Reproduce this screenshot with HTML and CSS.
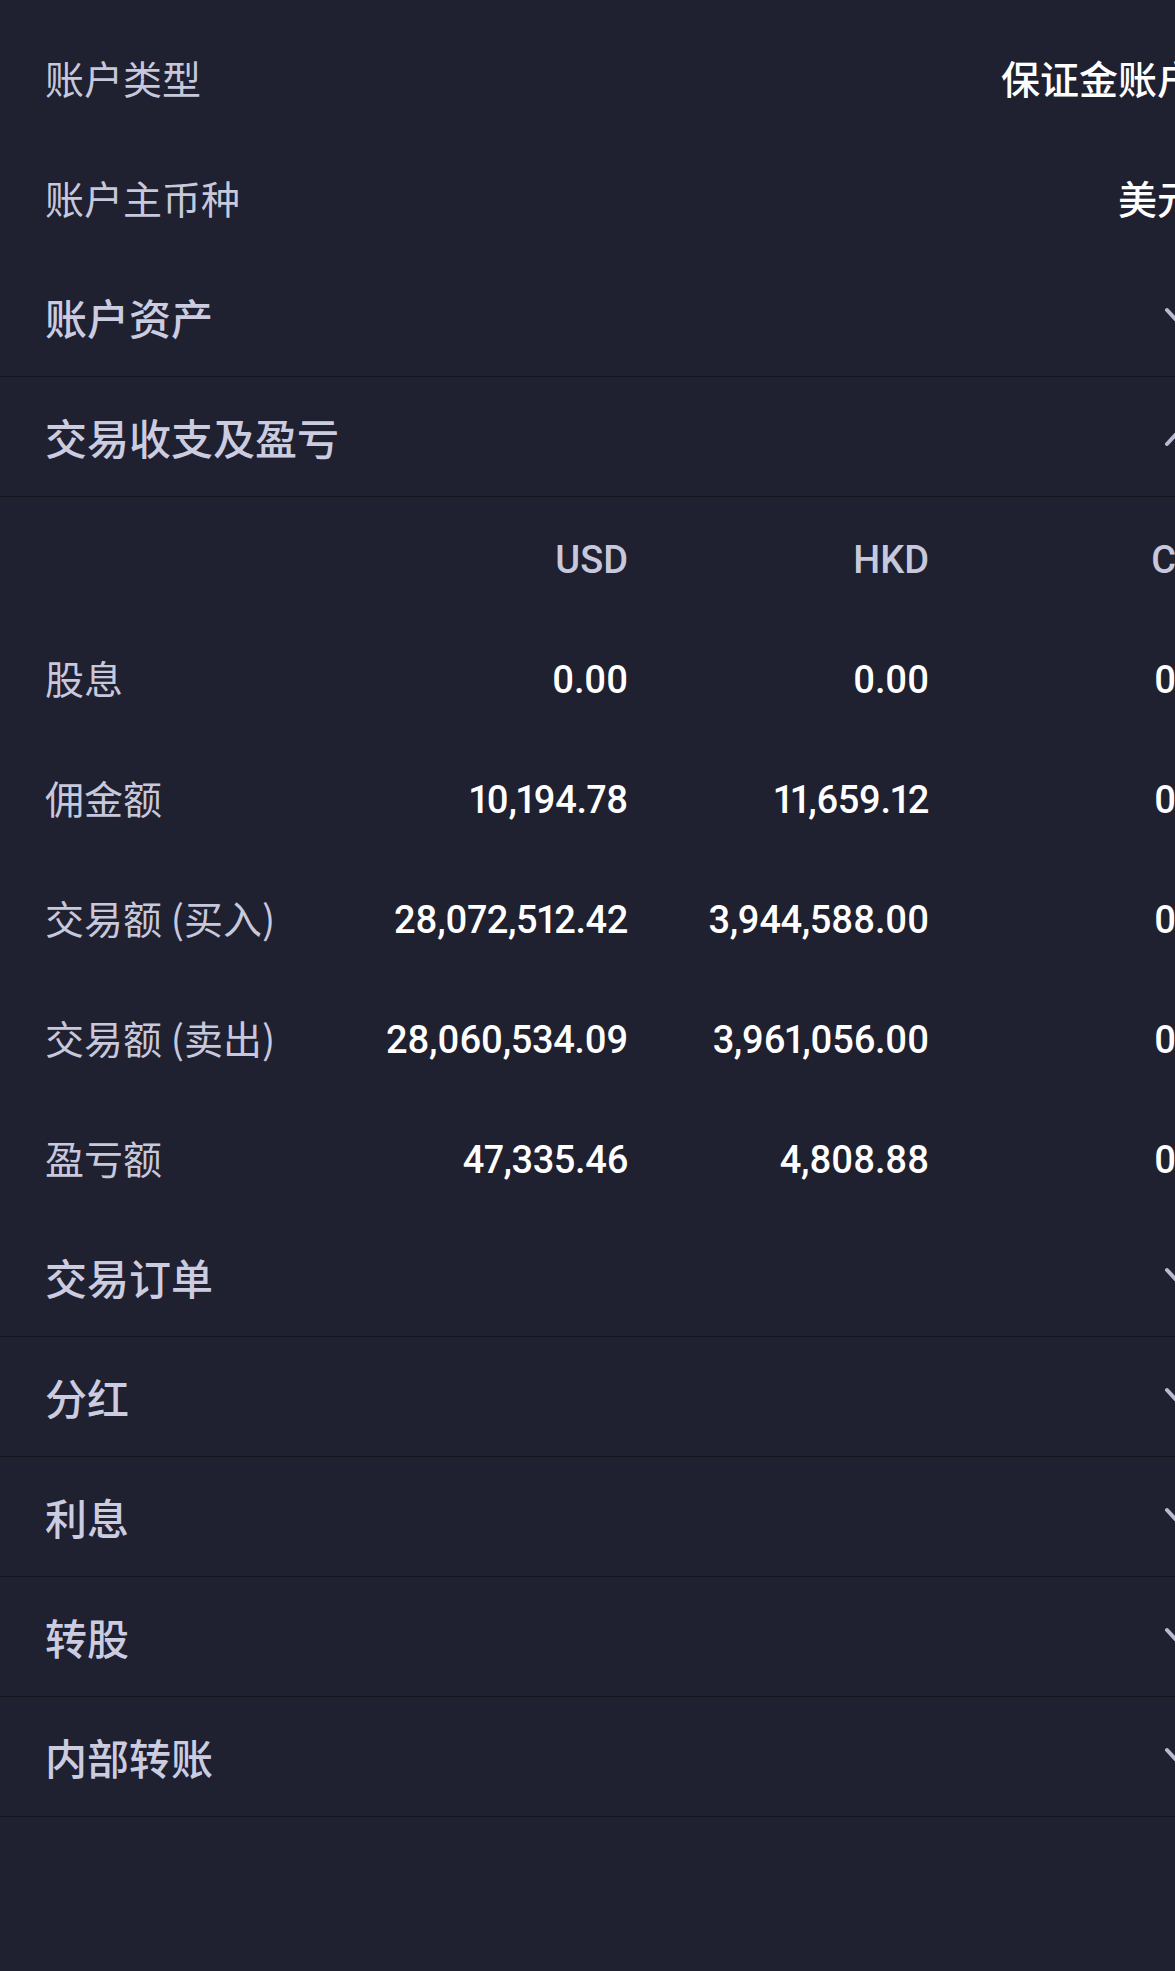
FILE: index.html
```html
<!DOCTYPE html>
<html lang="zh-CN">
<head>
<meta charset="utf-8">
<title>账户</title>
<link rel="stylesheet" href="styles.css">
</head>
<body>
<div class="page">
  <div class="row">
    <span class="label">账户类型</span>
    <span class="value">保证金账户</span>
  </div>
  <div class="row">
    <span class="label">账户主币种</span>
    <span class="value">美元</span>
  </div>
  <div class="row section">
    <span class="title">账户资产</span>
    <svg class="chev" viewBox="0 0 32 20" width="32" height="20"><path d="M3 3 L16 17 L29 3"/></svg>
  </div>
  <div class="row section">
    <span class="title">交易收支及盈亏</span>
    <svg class="chev" viewBox="0 0 32 20" width="32" height="20"><path d="M3 17 L16 3 L29 17"/></svg>
  </div>
  <div class="table">
    <div class="trow thead">
      <span></span><span class="num">USD</span><span class="num">HKD</span><span class="num">CNH</span>
    </div>
    <div class="trow">
      <span class="label">股息</span><span class="num">0.00</span><span class="num">0.00</span><span class="num">0.00</span>
    </div>
    <div class="trow">
      <span class="label">佣金额</span><span class="num">10,194.78</span><span class="num">11,659.12</span><span class="num">0.00</span>
    </div>
    <div class="trow">
      <span class="label">交易额 (买入)</span><span class="num">28,072,512.42</span><span class="num">3,944,588.00</span><span class="num">0.00</span>
    </div>
    <div class="trow">
      <span class="label">交易额 (卖出)</span><span class="num">28,060,534.09</span><span class="num">3,961,056.00</span><span class="num">0.00</span>
    </div>
    <div class="trow">
      <span class="label">盈亏额</span><span class="num">47,335.46</span><span class="num">4,808.88</span><span class="num">0.00</span>
    </div>
  </div>
  <div class="row section">
    <span class="title">交易订单</span>
    <svg class="chev" viewBox="0 0 32 20" width="32" height="20"><path d="M3 3 L16 17 L29 3"/></svg>
  </div>
  <div class="row section">
    <span class="title">分红</span>
    <svg class="chev" viewBox="0 0 32 20" width="32" height="20"><path d="M3 3 L16 17 L29 3"/></svg>
  </div>
  <div class="row section">
    <span class="title">利息</span>
    <svg class="chev" viewBox="0 0 32 20" width="32" height="20"><path d="M3 3 L16 17 L29 3"/></svg>
  </div>
  <div class="row section">
    <span class="title">转股</span>
    <svg class="chev" viewBox="0 0 32 20" width="32" height="20"><path d="M3 3 L16 17 L29 3"/></svg>
  </div>
  <div class="row section">
    <span class="title">内部转账</span>
    <svg class="chev" viewBox="0 0 32 20" width="32" height="20"><path d="M3 3 L16 17 L29 3"/></svg>
  </div>
</div>
</body>
</html>
```
FILE: styles.css
```css
html, body {
  margin: 0;
  padding: 0;
  background: #1f2030;
  overflow: hidden;
}

body {
  font-family: "Noto Sans CJK SC", "Noto Sans", sans-serif;
  color: #c7c8dc;
}

.page {
  width: 1241px;
  padding-top: 17px;
}

.row {
  box-sizing: border-box;
  height: 120px;
  padding: 0 45px;
  display: flex;
  align-items: center;
  justify-content: space-between;
}

.section {
  border-bottom: 1px solid #14151f;
}

.label {
  font-size: 39px;
  font-weight: 400;
  line-height: 1;
  color: #c7c8dc;
}

.title {
  font-size: 42px;
  font-weight: 500;
  line-height: 1;
  color: #cbcce0;
}

.value {
  font-size: 39px;
  font-weight: 500;
  line-height: 1;
  color: #ffffff;
}

.chev {
  display: block;
  flex: none;
}

.chev path {
  fill: none;
  stroke: #b8bad2;
  stroke-width: 4;
  stroke-linecap: round;
  stroke-linejoin: round;
}

.trow {
  box-sizing: border-box;
  height: 120px;
  padding-left: 45px;
  display: grid;
  grid-template-columns: 282px 301px 301px 301px;
  align-items: center;
}

.num {
  font-family: Roboto, "Liberation Sans", sans-serif;
  font-size: 38px;
  font-weight: 500;
  line-height: 1;
  padding-top: 5px;
  letter-spacing: -0.4px;
  text-align: right;
  color: #ffffff;
  font-variant-numeric: proportional-nums;
}

.thead .num {
  color: #c7c8dc;
  letter-spacing: 0;
}
```
